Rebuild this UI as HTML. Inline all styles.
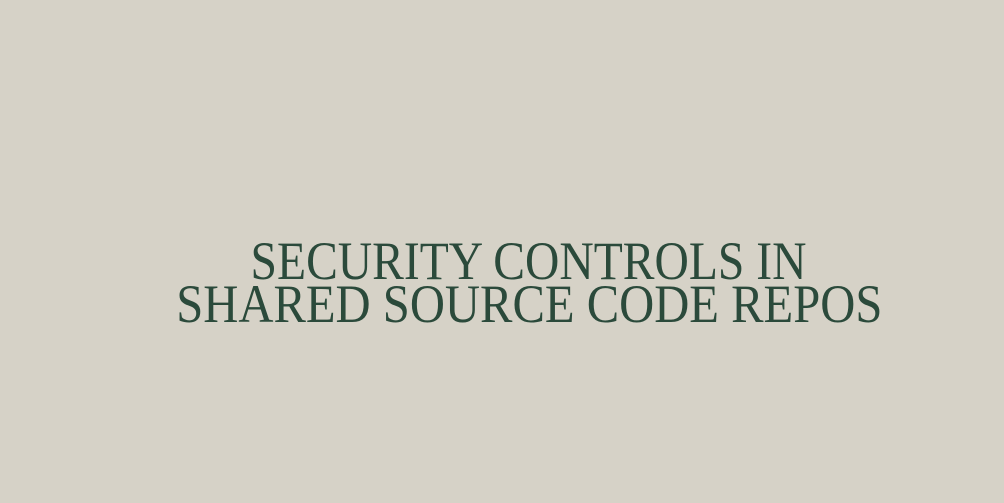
<!DOCTYPE html>
<html><head><meta charset="utf-8"><style>
html,body{margin:0;padding:0;width:1004px;height:503px;background:#d6d2c7;overflow:hidden}
.l{position:absolute;left:0;width:1058px;text-align:center;font-family:"Liberation Serif",serif;font-size:54px;line-height:54px;color:#2b4a3b;white-space:nowrap}
.l span{display:inline-block;transform-origin:center}
</style></head><body>
<div class="l" style="top:234px"><span style="transform:scaleX(0.881)">SECURITY CONTROLS IN</span></div>
<div class="l" style="top:277px"><span style="transform:scaleX(0.9)">SHARED SOURCE CODE REPOS</span></div>
</body></html>
